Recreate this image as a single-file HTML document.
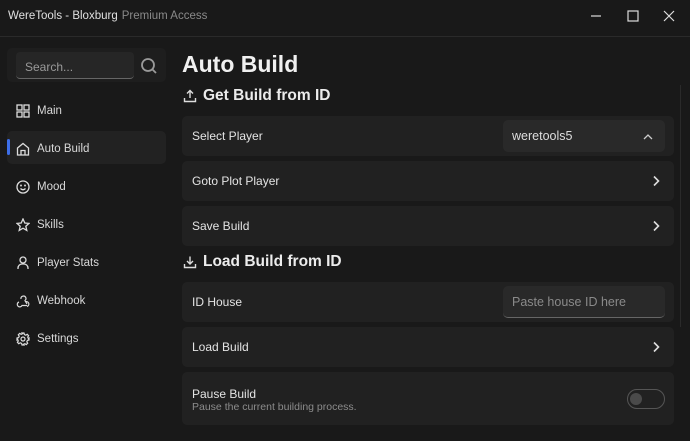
<!DOCTYPE html>
<html><head><style>
*{margin:0;padding:0;box-sizing:border-box}
body{width:690px;height:441px;background:#191919;font-family:"Liberation Sans",sans-serif;color:#e6e6e6;position:relative;overflow:hidden}
.abs{position:absolute}
.title{left:8px;top:10px;font-size:11.5px;color:#e0e0e0}
.title span{color:#8a8a8a;margin-left:4px}
.bar{left:0;top:36px;width:690px;height:1px;background:#2a2a2a}
.row{position:absolute;left:182px;width:492px;background:#212121;border-radius:5px;font-size:12px;color:#e4e4e4}
.row .l{position:absolute;left:10px;top:50%;transform:translateY(-50%)}
.chev{position:absolute;right:14px;top:50%;transform:translateY(-50%)}
.nav{position:absolute;left:16px;font-size:11.5px;color:#d8d8d8;display:flex;align-items:center;gap:7px}
.nav svg{width:14px;height:14px}
h1{position:absolute;left:182px;top:51px;font-size:23px;font-weight:bold;color:#f0f0f0}
h2{position:absolute;left:203px;font-size:15.5px;font-weight:bold;color:#ececec}
</style></head><body>
<div class="abs title">WereTools - Bloxburg<span>Premium Access</span></div>
<svg class="abs" style="left:590px;top:9px" width="90" height="14" viewBox="0 0 90 14" stroke="#ddd" stroke-width="1.2" fill="none"><line x1="1" y1="7" x2="11" y2="7"/><rect x="38" y="2" width="10" height="10"/><path d="M74 2l10 10M84 2L74 12"/></svg>
<div class="abs bar"></div>
<div class="abs" style="left:7px;top:48px;width:159px;height:34px;background:#1e1e1e;border-radius:5px"></div>
<div class="abs" style="left:16px;top:52px;width:118px;height:27px;background:#262626;border-radius:4px;border-bottom:1px solid #666"></div>
<div class="abs" style="left:25px;top:60px;font-size:12px;color:#9a9a9a">Search...</div>
<svg class="abs" style="left:140px;top:57px" width="18" height="18" viewBox="0 0 18 18" fill="none" stroke="#9a9a9a" stroke-width="1.8"><circle cx="8" cy="8" r="6"/><line x1="12.5" y1="12.5" x2="16" y2="16"/></svg>
<div class="abs" style="left:7px;top:131px;width:159px;height:33px;background:#222;border-radius:5px"></div>
<div class="abs" style="left:7px;top:139px;width:3px;height:16px;background:#3d6ee8;border-radius:2px"></div>
<div class="nav" style="top:104px"><svg viewBox="0 0 14 14" fill="none" stroke="#ddd" stroke-width="1.3"><rect x="1" y="1" width="5" height="5"/><rect x="8" y="1" width="5" height="5"/><rect x="1" y="8" width="5" height="5"/><rect x="8" y="8" width="5" height="5"/></svg>Main</div>
<div class="nav" style="top:142px"><svg viewBox="0 0 14 14" fill="none" stroke="#ddd" stroke-width="1.3"><path d="M1.5 6L7 1.5 12.5 6V13h-11z M5 13V8.5h4V13"/></svg>Auto Build</div>
<div class="nav" style="top:180px"><svg viewBox="0 0 14 14" fill="none" stroke="#ddd" stroke-width="1.3"><circle cx="7" cy="7" r="6"/><path d="M4.5 8.5q2.5 2.5 5 0"/><circle cx="5" cy="5.5" r=".4"/><circle cx="9" cy="5.5" r=".4"/></svg>Mood</div>
<div class="nav" style="top:218px"><svg viewBox="0 0 14 14" fill="none" stroke="#ddd" stroke-width="1.3"><path d="M7 1l1.8 4 4.2.4-3.2 2.8 1 4.2L7 10.2 3.2 12.4l1-4.2L1 5.4l4.2-.4z"/></svg>Skills</div>
<div class="nav" style="top:256px"><svg viewBox="0 0 14 14" fill="none" stroke="#ddd" stroke-width="1.3"><circle cx="7" cy="4" r="3"/><path d="M2 13v-1a4 4 0 0 1 4-4h2a4 4 0 0 1 4 4v1"/></svg>Player Stats</div>
<div class="nav" style="top:294px"><svg viewBox="0 0 14 14" fill="none" stroke="#ddd" stroke-width="1.2"><path d="M5 5a2.5 2.5 0 1 1 4 1.5L11 10M3 8a2.5 2.5 0 1 0 3 3.5h5M9 8a2.5 2.5 0 1 1 2 4.5"/></svg>Webhook</div>
<div class="nav" style="top:332px"><svg viewBox="0 0 14 14" fill="none" stroke="#ddd" stroke-width="1.2"><circle cx="7" cy="7" r="2"/><path d="M6 1h2l.4 1.6 1.4.6 1.4-.9 1.4 1.4-.9 1.4.6 1.4L13 6v2l-1.6.4-.6 1.4.9 1.4-1.4 1.4-1.4-.9-1.4.6L8 13H6l-.4-1.6-1.4-.6-1.4.9-1.4-1.4.9-1.4-.6-1.4L1 8V6l1.6-.4.6-1.4-.9-1.4 1.4-1.4 1.4.9 1.4-.6z"/></svg>Settings</div>
<h1>Auto Build</h1>
<svg class="abs" style="left:183px;top:89px" width="14" height="14" viewBox="0 0 14 14" fill="none" stroke="#ddd" stroke-width="1.4"><path d="M7 9V1.5M4 4.5l3-3 3 3M1.5 9v3.5h11V9"/></svg>
<h2 style="top:87px">Get Build from ID</h2>
<div class="abs" style="left:680px;top:85px;width:1px;height:242px;background:#2a2a2a"></div>
<div class="row" style="top:116px;height:40px"><span class="l">Select Player</span>
<div class="abs" style="left:321px;top:4px;width:162px;height:32px;background:#292929;border-radius:5px"><span class="abs" style="left:9px;top:9px;font-size:12.5px;color:#ddd">weretools5</span><svg class="abs" style="left:140px;top:13px" width="10" height="7" viewBox="0 0 10 7" fill="none" stroke="#ccc" stroke-width="1.3"><path d="M1 6l4-4 4 4"/></svg></div></div>
<div class="row" style="top:161px;height:40px"><span class="l">Goto Plot Player</span><svg class="chev" width="7" height="11" viewBox="0 0 7 11" fill="none" stroke="#ddd" stroke-width="1.6"><path d="M1 1l4.5 4.5L1 10"/></svg></div>
<div class="row" style="top:206px;height:40px"><span class="l">Save Build</span><svg class="chev" width="7" height="11" viewBox="0 0 7 11" fill="none" stroke="#ddd" stroke-width="1.6"><path d="M1 1l4.5 4.5L1 10"/></svg></div>
<svg class="abs" style="left:183px;top:255px" width="14" height="14" viewBox="0 0 14 14" fill="none" stroke="#ddd" stroke-width="1.4"><path d="M7 1.5V9M4 6l3 3 3-3M1.5 9v3.5h11V9"/></svg>
<h2 style="top:253px">Load Build from ID</h2>
<div class="row" style="top:282px;height:40px"><span class="l">ID House</span>
<div class="abs" style="left:321px;top:4px;width:162px;height:32px;background:#292929;border-radius:5px;border-bottom:1px solid #666"><span class="abs" style="left:9px;top:9px;font-size:12.5px;color:#8a8a8a">Paste house ID here</span></div></div>
<div class="row" style="top:327px;height:40px"><span class="l">Load Build</span><svg class="chev" width="7" height="11" viewBox="0 0 7 11" fill="none" stroke="#ddd" stroke-width="1.6"><path d="M1 1l4.5 4.5L1 10"/></svg></div>
<div class="row" style="top:372px;height:53px"><span class="abs" style="left:10px;top:15px">Pause Build</span><span class="abs" style="left:10px;top:29px;font-size:10.5px;color:#8c8c8c">Pause the current building process.</span>
<div class="abs" style="left:445px;top:17px;width:38px;height:20px;border:1px solid #555;border-radius:10px"><div class="abs" style="left:2px;top:3px;width:12px;height:12px;border-radius:6px;background:#4a4a4a"></div></div></div>
</body></html>
